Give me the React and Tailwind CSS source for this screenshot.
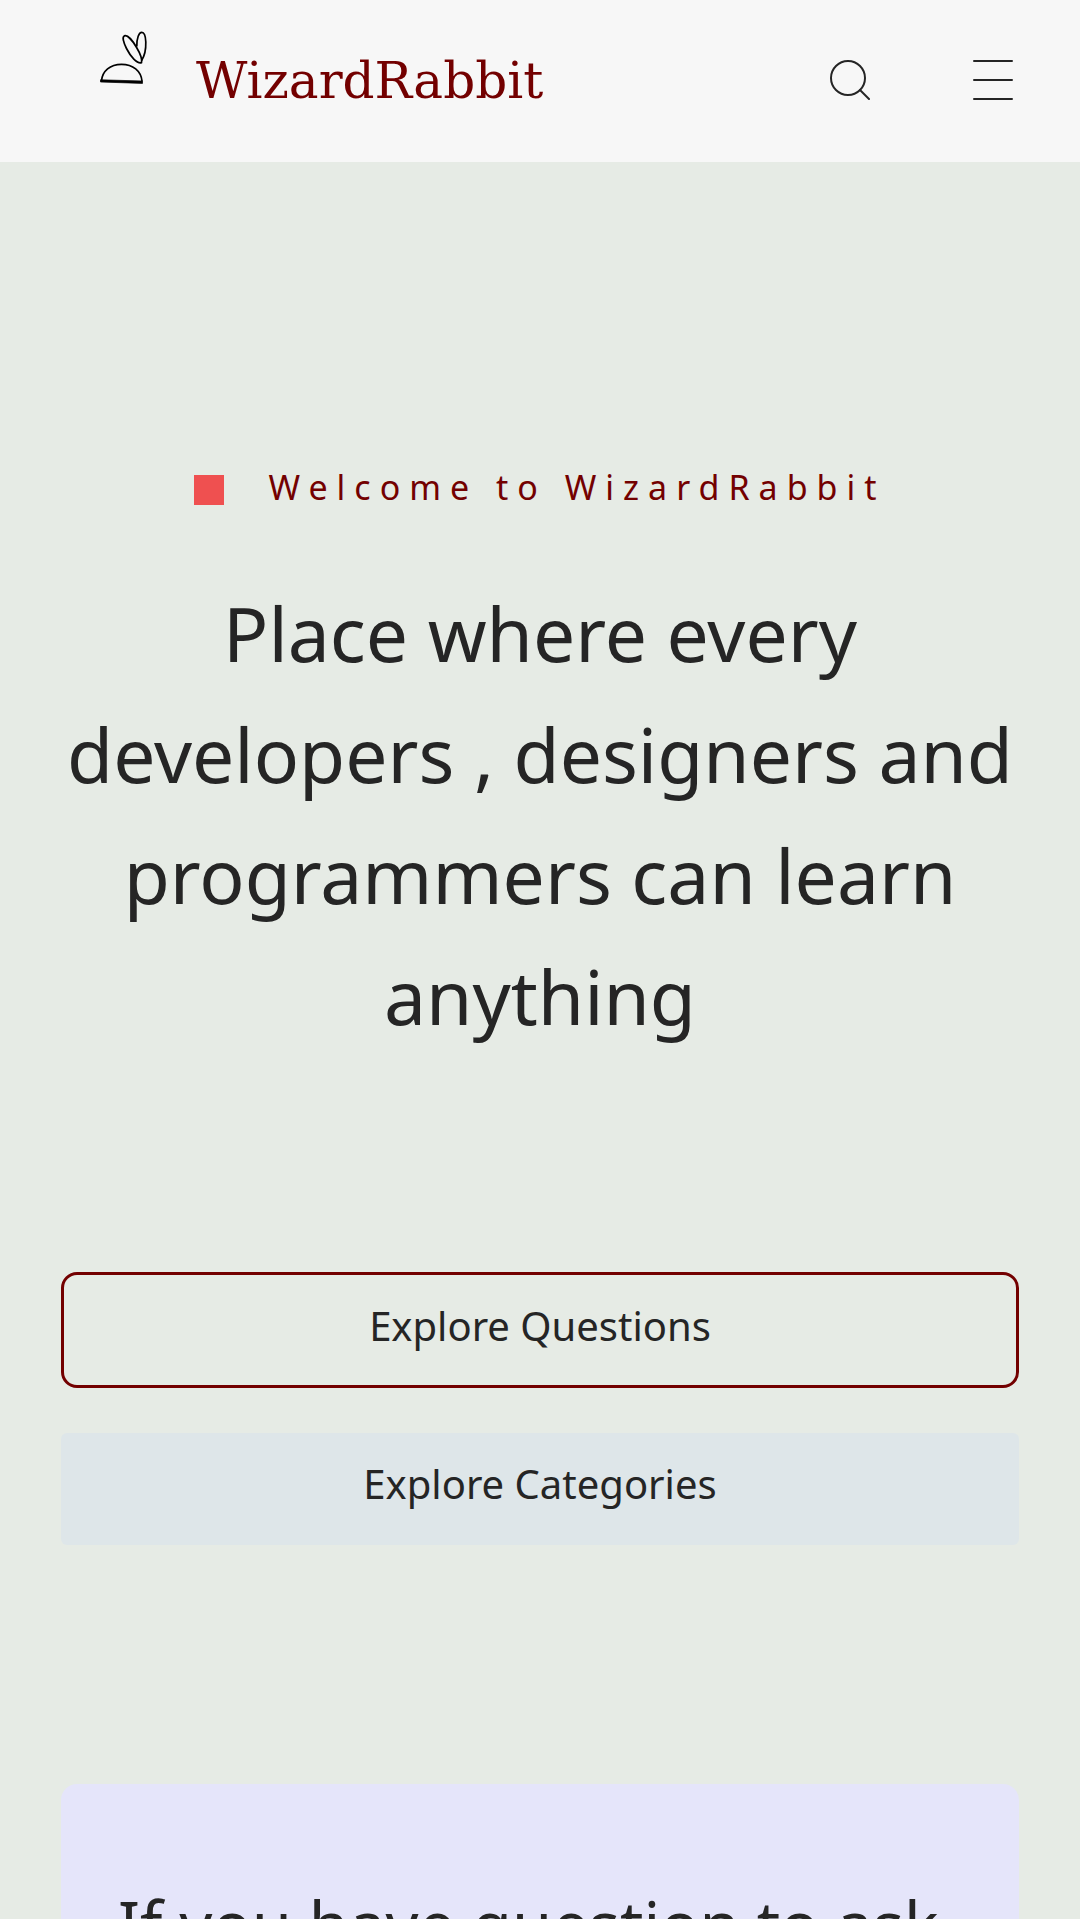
import React from "react";

function RabbitLogo() {
  return (
    <svg viewBox="0 0 100 100" className="h-[100px] w-[100px] shrink-0" fill="none" stroke="#000" aria-hidden="true">
      <path d="M21.5 70.5C22.5 61 30 54.3 41.5 54.3C53 54.3 61 61 62 71" strokeWidth="1.7" />
      <path d="M20.5 69.8L62.5 71V73.4L20.5 72Z" fill="#000" strokeWidth="0.7" />
      <path d="M61.6 50.5C64.5 46 66 39 65.8 32C65.6 26 64 22.3 61.8 22.3C59 22.3 56.6 28 56.8 36.5" strokeWidth="1.7" />
      <path d="M61.5 52.6C57 54 50.5 46.5 46.5 38.5C43.3 32 42 27 44.3 25.9C47 24.8 52 29.5 56.6 37.5C60.5 44 62.3 49 61.5 52.6Z" strokeWidth="1.7" />
    </svg>
  );
}

function SearchIcon() {
  return (
    <svg viewBox="0 0 40 40" className="h-10 w-10" fill="none" stroke="#252525" strokeWidth="2" aria-hidden="true">
      <circle cx="18" cy="18" r="17" />
      <path d="M30 30L39 39" strokeLinecap="round" />
    </svg>
  );
}

function MenuIcon() {
  return (
    <svg viewBox="0 0 40 40" className="h-10 w-10" fill="none" stroke="#252525" strokeWidth="2" strokeLinecap="round" aria-hidden="true">
      <path d="M1 1H39M1 20H39M1 39H39" />
    </svg>
  );
}

export default function App() {
  return (
    <div className="min-h-screen bg-[#e6ebe5] font-['Noto_Sans',sans-serif] text-[#252525]">
      <header className="flex h-[162px] items-start justify-between bg-[#f7f7f7] pl-20 pr-[67px]">
        <a href="#" className="flex items-start gap-4 pt-2.5">
          <RabbitLogo />
          <span className="pt-9 font-['DejaVu_Serif',serif] text-[50px] leading-[70px] text-[#730000]">WizardRabbit</span>
        </a>
        <div className="flex gap-[103px] pt-[60px]">
          <button type="button" aria-label="Search">
            <SearchIcon />
          </button>
          <button type="button" aria-label="Menu">
            <MenuIcon />
          </button>
        </div>
      </header>

      <main className="px-[61px]">
        <section className="pt-[295px] text-center">
          <p className="flex items-center justify-center gap-11 text-[34px] leading-[60px] tracking-[9px] text-[#730000]">
            <span className="mt-1.5 h-[30px] w-[30px] bg-[#ef5050]" />
            <span>Welcome to WizardRabbit</span>
          </p>
          <h1 className="mt-14 text-[75px] leading-[121px]">
            Place where every developers , designers and programmers can learn anything
          </h1>
          <div className="mt-[215px] flex flex-col gap-[45px]">
            <button type="button" className="rounded-2xl border-3 border-[#730000] pt-6 pb-8 text-[40px] leading-[54px]">
              Explore Questions
            </button>
            <button type="button" className="rounded-md bg-[#dee6e9] pt-6 pb-[34px] text-[40px] leading-[54px]">
              Explore Categories
            </button>
          </div>
        </section>

        <section className="mt-[239px] rounded-2xl bg-[#e5e5fa] px-[57px] pt-[86px] pb-20">
          <h2 className="text-[65px] leading-[108px]">If you have question to ask</h2>
        </section>
      </main>
    </div>
  );
}
